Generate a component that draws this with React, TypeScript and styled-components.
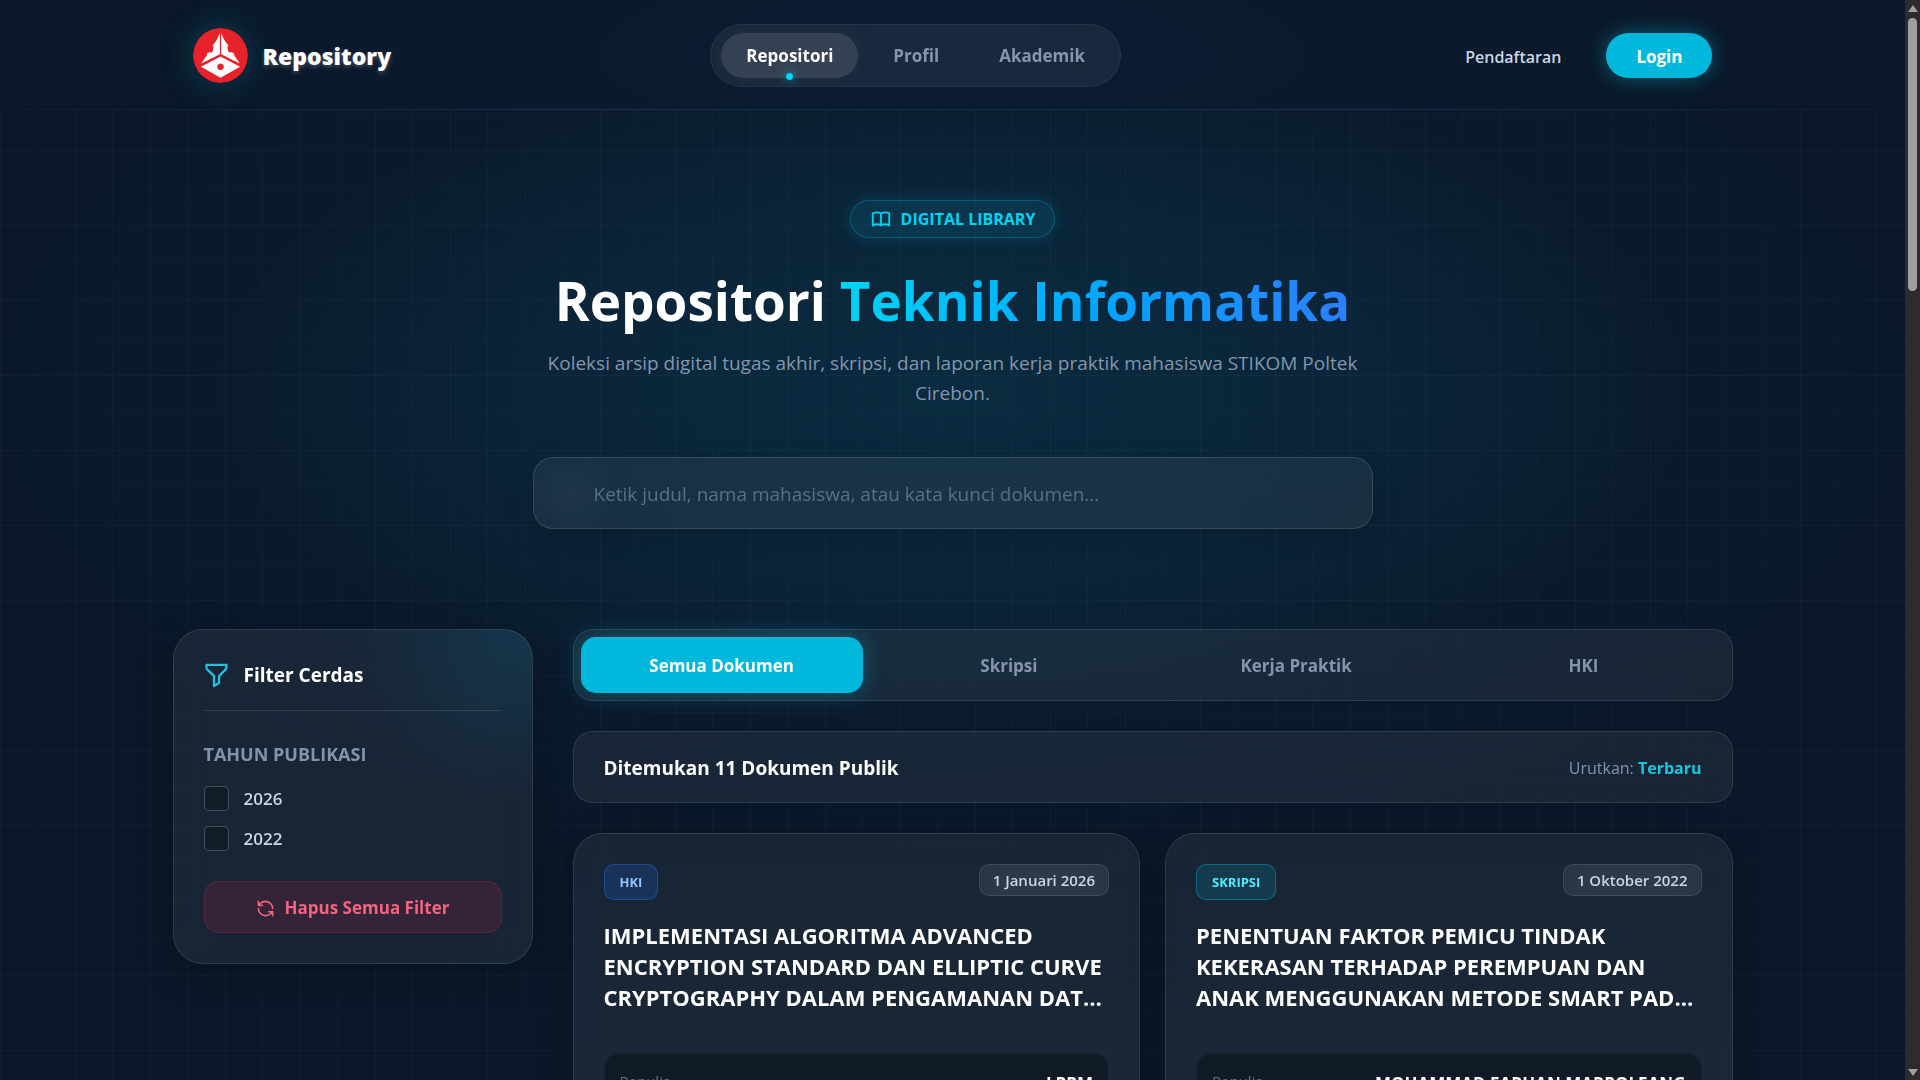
import React, { useState } from "react";
import styled, { createGlobalStyle, css } from "styled-components";

const GlobalStyle = createGlobalStyle`
  *, *::before, *::after { box-sizing: border-box; }
  html, body { margin: 0; background: #0a1829; }
  body {
    font-family: "Open Sans", "Noto Sans", "Liberation Sans", sans-serif;
    font-size: 19px;
    line-height: 30px;
    color: #fff;
    overflow: hidden;
  }
  h1, h2, h3, p, dl, dd, dt, fieldset, legend { margin: 0; padding: 0; border: 0; }
  button, input { font: inherit; }
  button { cursor: pointer; }
  a { text-decoration: none; }
`;

const glass = css`
  background: rgba(255, 255, 255, 0.06);
  border: 1px solid rgba(255, 255, 255, 0.1);
  backdrop-filter: blur(16px);
`;

const Window = styled.div`
  display: flex;
  height: 100vh;
  overflow: hidden;
`;

const Page = styled.div`
  flex: 1;
  min-width: 0;
  overflow: hidden;
  background-color: #0a1829;
  background-image:
    linear-gradient(to right, rgba(255, 255, 255, 0.028) 1px, transparent 1px, transparent 37px, rgba(255, 255, 255, 0.02) 37px, rgba(255, 255, 255, 0.02) 38px, transparent 38px),
    linear-gradient(to bottom, rgba(255, 255, 255, 0.026) 1px, transparent 1px, transparent 37px, rgba(255, 255, 255, 0.016) 37px, rgba(255, 255, 255, 0.016) 38px, transparent 38px),
    radial-gradient(ellipse 1000px 460px at 50% 390px, rgba(10, 46, 67, 0.85), rgba(11, 42, 64, 0.7) 40%, rgba(11, 30, 54, 0.35) 75%, rgba(11, 28, 50, 0) 100%);
  background-size: 75px 75px, 75px 75px, 100% 100%;
`;

const Header = styled.header`
  background: radial-gradient(ellipse 800px 200px at 50% 50%, #0b1c33, #0a1829);
  border-bottom: 1px solid;
  border-image: linear-gradient(to right, #0d1d31, #192f52 30%, #192f52 70%, #0d1d31) 1;
`;

const Container = styled.div`
  max-width: 1560px;
  margin: 0 auto;
`;

const HeaderRow = styled(Container)`
  display: flex;
  align-items: center;
  justify-content: space-between;
  height: 109px;
  padding: 2px 20px 0;
`;

const Brand = styled.a`
  display: flex;
  align-items: center;
  gap: 15px;
  color: #fff;
  font-size: 23px;
  font-weight: 800;
  text-shadow: 0 2px 4px rgba(255, 255, 255, 0.25);
`;

const LogoMark = styled.svg`
  width: 55px;
  height: 55px;
  border-radius: 50%;
  box-shadow: 0 0 34px rgba(6, 182, 212, 0.28);
`;

const Nav = styled.nav`
  ${glass}
  display: flex;
  gap: 10px;
  padding: 8px 10px;
  border-radius: 32px;
  border-color: rgba(255, 255, 255, 0.06);
`;

const NavLink = styled.a<{ $active?: boolean }>`
  position: relative;
  padding: 0 25px;
  border-radius: 23px;
  font-size: 17px;
  line-height: 45px;
  font-weight: 700;
  color: ${(p) => (p.$active ? "#fff" : "#8495ad")};
  ${(p) =>
    p.$active &&
    css`
      background: rgba(255, 255, 255, 0.12);
      box-shadow: 0 0 18px rgba(255, 255, 255, 0.05);
      &::after {
        content: "";
        position: absolute;
        left: calc(50% - 4px);
        bottom: -2px;
        width: 7px;
        height: 7px;
        border-radius: 50%;
        background: #00d3f3;
        box-shadow: 0 0 10px #00d3f3aa;
      }
    `}
`;

const Account = styled.div`
  display: flex;
  align-items: center;
  gap: 20px;
`;

const PlainLink = styled.a`
  padding: 2px 25px 0;
  font-size: 16px;
  font-weight: 600;
  color: #cad5e2;
`;

const LoginButton = styled.button`
  height: 45px;
  padding: 2px 30px 0;
  border: 0;
  border-radius: 23px;
  background: #00b8db;
  color: #fff;
  font-size: 17px;
  font-weight: 700;
  box-shadow: 0 0 20px rgba(6, 182, 212, 0.45);
`;

const Hero = styled.section`
  display: flex;
  flex-direction: column;
  align-items: center;
  padding: 90px 20px 100px;
  text-align: center;
`;

const Eyebrow = styled.span`
  display: flex;
  align-items: center;
  gap: 9px;
  height: 38px;
  padding: 0 19px;
  border: 1px solid rgba(0, 184, 219, 0.3);
  border-radius: 19px;
  background: rgba(0, 184, 219, 0.12);
  box-shadow: 0 0 16px rgba(6, 182, 212, 0.2);
  color: #00d3f3;
  font-size: 16px;
  font-weight: 700;
`;

const Title = styled.h1`
  margin-top: 30px;
  font-size: 53px;
  line-height: 66px;
  font-weight: 700;
`;

const Gradient = styled.span`
  background: linear-gradient(to right, #00d3f3, #00a6ff 50%, #2b7fff);
  background-clip: text;
  -webkit-background-clip: text;
  color: transparent;
`;

const Subtitle = styled.p`
  max-width: 840px;
  margin-top: 14px;
  color: #8396ad;
`;

const SearchForm = styled.form`
  width: 100%;
  max-width: 840px;
  margin-top: 49px;
`;

const SearchInput = styled.input`
  ${glass}
  display: block;
  width: 100%;
  height: 72px;
  padding: 2px 60px 0;
  border-radius: 20px;
  outline: 0;
  color: #fff;
  background: radial-gradient(circle 44px at 34px 50%, rgba(60, 80, 120, 0.16), transparent), rgba(255, 255, 255, 0.06);
  border-color: rgba(255, 255, 255, 0.13);
  box-shadow: 0 10px 30px rgba(0, 0, 0, 0.14);
  &::placeholder { color: #5a7086; opacity: 1; }
`;

const Content = styled(Container)`
  display: grid;
  grid-template-columns: 360px minmax(0, 1fr);
  gap: 40px;
  align-items: start;
`;

const Sidebar = styled.aside`
  ${glass}
  padding: 30px;
  border-radius: 30px;
  background:
    radial-gradient(circle 150px at 95% 5%, rgba(6, 130, 170, 0.14), transparent),
    rgba(255, 255, 255, 0.06);
  box-shadow: 0 10px 40px rgba(0, 0, 0, 0.2);
`;

const SidebarTitle = styled.h2`
  display: flex;
  align-items: center;
  gap: 15px;
  padding-bottom: 20px;
  border-bottom: 1px solid rgba(255, 255, 255, 0.12);
  font-size: 19px;
  line-height: 30px;
  font-weight: 700;
  svg { color: #1fc3df; }
`;

const YearGroup = styled.fieldset`
  display: flex;
  flex-direction: column;
  gap: 15px;
  margin-top: 28px;
`;

const YearLegend = styled.legend`
  margin-bottom: 17px;
  color: #8293aa;
  font-size: 18px;
  font-weight: 700;
`;

const YearOption = styled.label`
  display: flex;
  align-items: center;
  gap: 15px;
  line-height: 25px;
  font-size: 17px;
  font-weight: 600;
  color: #cad5e2;
`;

const Checkbox = styled.input`
  appearance: none;
  width: 25px;
  height: 25px;
  margin: 0;
  border: 1px solid rgba(255, 255, 255, 0.22);
  border-radius: 5px;
  background: #121c28;
  &:checked { background: #00b8db; }
`;

const ResetButton = styled.button`
  display: flex;
  align-items: center;
  justify-content: center;
  gap: 10px;
  width: 100%;
  height: 52px;
  margin-top: 30px;
  padding: 2px 0 0;
  border: 1px solid rgba(255, 32, 86, 0.22);
  border-radius: 15px;
  background: rgba(255, 32, 86, 0.12);
  color: #f4637f;
  font-size: 17px;
  font-weight: 700;
`;

const Results = styled.main`
  display: flex;
  flex-direction: column;
  gap: 30px;
`;

const Tabs = styled.div`
  ${glass}
  display: grid;
  grid-template-columns: repeat(4, 1fr);
  gap: 5px;
  height: 72px;
  padding: 7px;
  border-radius: 20px;
`;

const Tab = styled.button<{ $active: boolean }>`
  padding: 2px 0 0;
  border: 0;
  border-radius: 15px;
  background: ${(p) => (p.$active ? "#00b8db" : "transparent")};
  color: ${(p) => (p.$active ? "#fff" : "#8495ad")};
  box-shadow: ${(p) => (p.$active ? "0 0 22px rgba(6, 182, 212, 0.35)" : "none")};
  font-size: 17px;
  font-weight: 700;
`;

const Summary = styled.div`
  ${glass}
  display: flex;
  align-items: center;
  justify-content: space-between;
  height: 72px;
  padding: 2px 30px 0;
  border-radius: 20px;
`;

const Count = styled.h2`
  font-size: 19px;
  font-weight: 700;
`;

const Sort = styled.p`
  font-size: 16px;
  color: #8495ad;
  strong { color: #17c7e2; }
`;

const CardGrid = styled.div`
  display: grid;
  grid-template-columns: repeat(2, minmax(0, 1fr));
  gap: 25px;
`;

const Card = styled.article`
  ${glass}
  padding: 30px;
  border-radius: 30px;
  background: linear-gradient(rgba(255, 255, 255, 0.06), rgba(255, 255, 255, 0.07));
  box-shadow: 0 10px 40px rgba(0, 0, 0, 0.2);
`;

const CardTop = styled.div`
  display: flex;
  align-items: flex-start;
  justify-content: space-between;
`;

const Kind = styled.span<{ $tone: "blue" | "cyan" }>`
  padding: 0 15px;
  border: 1px solid ${(p) => (p.$tone === "blue" ? "rgba(43, 127, 255, 0.35)" : "rgba(0, 184, 219, 0.4)")};
  border-radius: 10px;
  background: ${(p) => (p.$tone === "blue" ? "rgba(30, 90, 200, 0.24)" : "rgba(0, 184, 219, 0.15)")};
  color: ${(p) => (p.$tone === "blue" ? "#8ec5ff" : "#53eafd")};
  font-size: 13px;
  line-height: 34px;
  font-weight: 700;
`;

const DateChip = styled.time`
  ${glass}
  padding: 0 13px;
  border-radius: 10px;
  color: #cad5e2;
  font-size: 15px;
  line-height: 30px;
  font-weight: 600;
`;

const CardTitle = styled.h3`
  margin-top: 20px;
  font-size: 22px;
  line-height: 31px;
  font-weight: 700;
`;

const TitleLine = styled.span`
  display: block;
  white-space: nowrap;
`;

const Details = styled.dl`
  margin-top: 40px;
  padding: 15px;
  border: 1px solid rgba(255, 255, 255, 0.04);
  border-radius: 15px;
  background: rgba(8, 16, 22, 0.5);
`;

const Detail = styled.div`
  display: flex;
  justify-content: space-between;
  dt { font-size: 15px; line-height: 24px; color: #62748e; }
  dd { font-size: 17px; line-height: 29px; font-weight: 700; }
`;

const ScrollTrack = styled.div`
  display: flex;
  flex-direction: column;
  align-items: center;
  width: 15px;
  padding: 5px 0 4px;
  background: #2c2c2c;
`;

const ScrollArrow = styled.i<{ $down?: boolean }>`
  border: 5px solid transparent;
  border-top: ${(p) => (p.$down ? "7px solid #9f9f9f" : "0")};
  border-bottom: ${(p) => (p.$down ? "0" : "7px solid #9f9f9f")};
`;

const ScrollThumb = styled.div`
  width: 9px;
  height: 273px;
  margin: 6px 0 auto;
  border-radius: 5px;
  background: #9f9f9f;
`;

const Stroke = styled.svg`
  flex: none;
  fill: none;
  stroke: currentColor;
  stroke-linecap: round;
  stroke-linejoin: round;
`;

const Logo = () => (
  <LogoMark viewBox="0 0 166 166" aria-hidden="true">
    <circle cx="83" cy="83" r="83" fill="#e8222a" />
    <g fill="#fff">
      <path d="M81 15 L81 79 L25 107 L41 84 L43 76 L50 73 L57 74 L60 69 L62 57 L59 53 L67 43 L74 31 Z" />
      <path d="M85 15 L85 79 L141 107 L125 84 L123 76 L116 73 L109 74 L106 69 L104 57 L107 53 L99 43 L92 31 Z" />
      <path fillRule="evenodd" d="M83 86 L142 117 L83 150 L24 117 Z M83 107 a10 10 0 1 0 .1 0 Z" />
    </g>
  </LogoMark>
);

const BookIcon = () => (
  <Stroke width="22" height="22" viewBox="0 0 24 24" strokeWidth="2" aria-hidden="true">
    <path d="M3 19a9 9 0 0 1 9 0a9 9 0 0 1 9 0M3 6a9 9 0 0 1 9 0a9 9 0 0 1 9 0M3 6v13M12 6v13M21 6v13" />
  </Stroke>
);

const FilterIcon = () => (
  <Stroke width="25" height="25" viewBox="2 2.5 20 20" strokeWidth="1.8" aria-hidden="true">
    <path d="M4 4h16v2.172a2 2 0 0 1-.586 1.414L14 13v5.5l-4 2.5v-8L4.52 7.572A2 2 0 0 1 4 6.227z" />
  </Stroke>
);

const RefreshIcon = () => (
  <Stroke width="19" height="19" viewBox="0 0 24 24" strokeWidth="2" aria-hidden="true">
    <path d="M21 12a9 9 0 0 0-9-9 9.75 9.75 0 0 0-6.74 2.74L3 8M3 3v5h5M3 12a9 9 0 0 0 9 9 9.75 9.75 0 0 0 6.74-2.74L21 16M16 16h5v5" />
  </Stroke>
);

const tabs = ["Semua Dokumen", "Skripsi", "Kerja Praktik", "HKI"];
const years = ["2026", "2022"];

const documents = [
  {
    kind: "HKI",
    tone: "blue" as const,
    date: "1 Januari 2026",
    title: ["IMPLEMENTASI ALGORITMA ADVANCED", "ENCRYPTION STANDARD DAN ELLIPTIC CURVE", "CRYPTOGRAPHY DALAM PENGAMANAN DAT…"],
    author: "LPPM",
  },
  {
    kind: "SKRIPSI",
    tone: "cyan" as const,
    date: "1 Oktober 2022",
    title: ["PENENTUAN FAKTOR PEMICU TINDAK", "KEKERASAN TERHADAP PEREMPUAN DAN", "ANAK MENGGUNAKAN METODE SMART PAD…"],
    author: "MOHAMMAD FARHAN MARPOLEANG",
  },
];

export default function App() {
  const [tab, setTab] = useState(tabs[0]);
  return (
    <Window>
      <GlobalStyle />
      <Page>
        <Header>
          <HeaderRow>
            <Brand href="#">
              <Logo />
              Repository
            </Brand>
            <Nav>
              <NavLink href="#" $active>Repositori</NavLink>
              <NavLink href="#">Profil</NavLink>
              <NavLink href="#">Akademik</NavLink>
            </Nav>
            <Account>
              <PlainLink href="#">Pendaftaran</PlainLink>
              <LoginButton type="button">Login</LoginButton>
            </Account>
          </HeaderRow>
        </Header>

        <Hero>
          <Eyebrow>
            <BookIcon />
            DIGITAL LIBRARY
          </Eyebrow>
          <Title>
            Repositori <Gradient>Teknik Informatika</Gradient>
          </Title>
          <Subtitle>
            Koleksi arsip digital tugas akhir, skripsi, dan laporan kerja praktik mahasiswa STIKOM Poltek Cirebon.
          </Subtitle>
          <SearchForm role="search" onSubmit={(e) => e.preventDefault()}>
            <SearchInput
              type="text"
              aria-label="Ketik judul, nama mahasiswa, atau kata kunci dokumen"
              placeholder="Ketik judul, nama mahasiswa, atau kata kunci dokumen..."
            />
          </SearchForm>
        </Hero>

        <Content>
          <Sidebar>
            <SidebarTitle>
              <FilterIcon />
              Filter Cerdas
            </SidebarTitle>
            <YearGroup>
              <YearLegend>TAHUN PUBLIKASI</YearLegend>
              {years.map((year) => (
                <YearOption key={year}>
                  <Checkbox type="checkbox" name="year" value={year} />
                  {year}
                </YearOption>
              ))}
            </YearGroup>
            <ResetButton type="button">
              <RefreshIcon />
              Hapus Semua Filter
            </ResetButton>
          </Sidebar>

          <Results>
            <Tabs>
              {tabs.map((name) => (
                <Tab key={name} type="button" $active={name === tab} onClick={() => setTab(name)}>
                  {name}
                </Tab>
              ))}
            </Tabs>
            <Summary>
              <Count>Ditemukan 11 Dokumen Publik</Count>
              <Sort>
                Urutkan: <strong>Terbaru</strong>
              </Sort>
            </Summary>
            <CardGrid>
              {documents.map((doc) => (
                <Card key={doc.kind}>
                  <CardTop>
                    <Kind $tone={doc.tone}>{doc.kind}</Kind>
                    <DateChip>{doc.date}</DateChip>
                  </CardTop>
                  <CardTitle>
                    {doc.title.map((line) => (
                      <TitleLine key={line}>{line}</TitleLine>
                    ))}
                  </CardTitle>
                  <Details>
                    <Detail>
                      <dt>Penulis</dt>
                      <dd>{doc.author}</dd>
                    </Detail>
                  </Details>
                </Card>
              ))}
            </CardGrid>
          </Results>
        </Content>
      </Page>
      <ScrollTrack aria-hidden="true">
        <ScrollArrow />
        <ScrollThumb />
        <ScrollArrow $down />
      </ScrollTrack>
    </Window>
  );
}
